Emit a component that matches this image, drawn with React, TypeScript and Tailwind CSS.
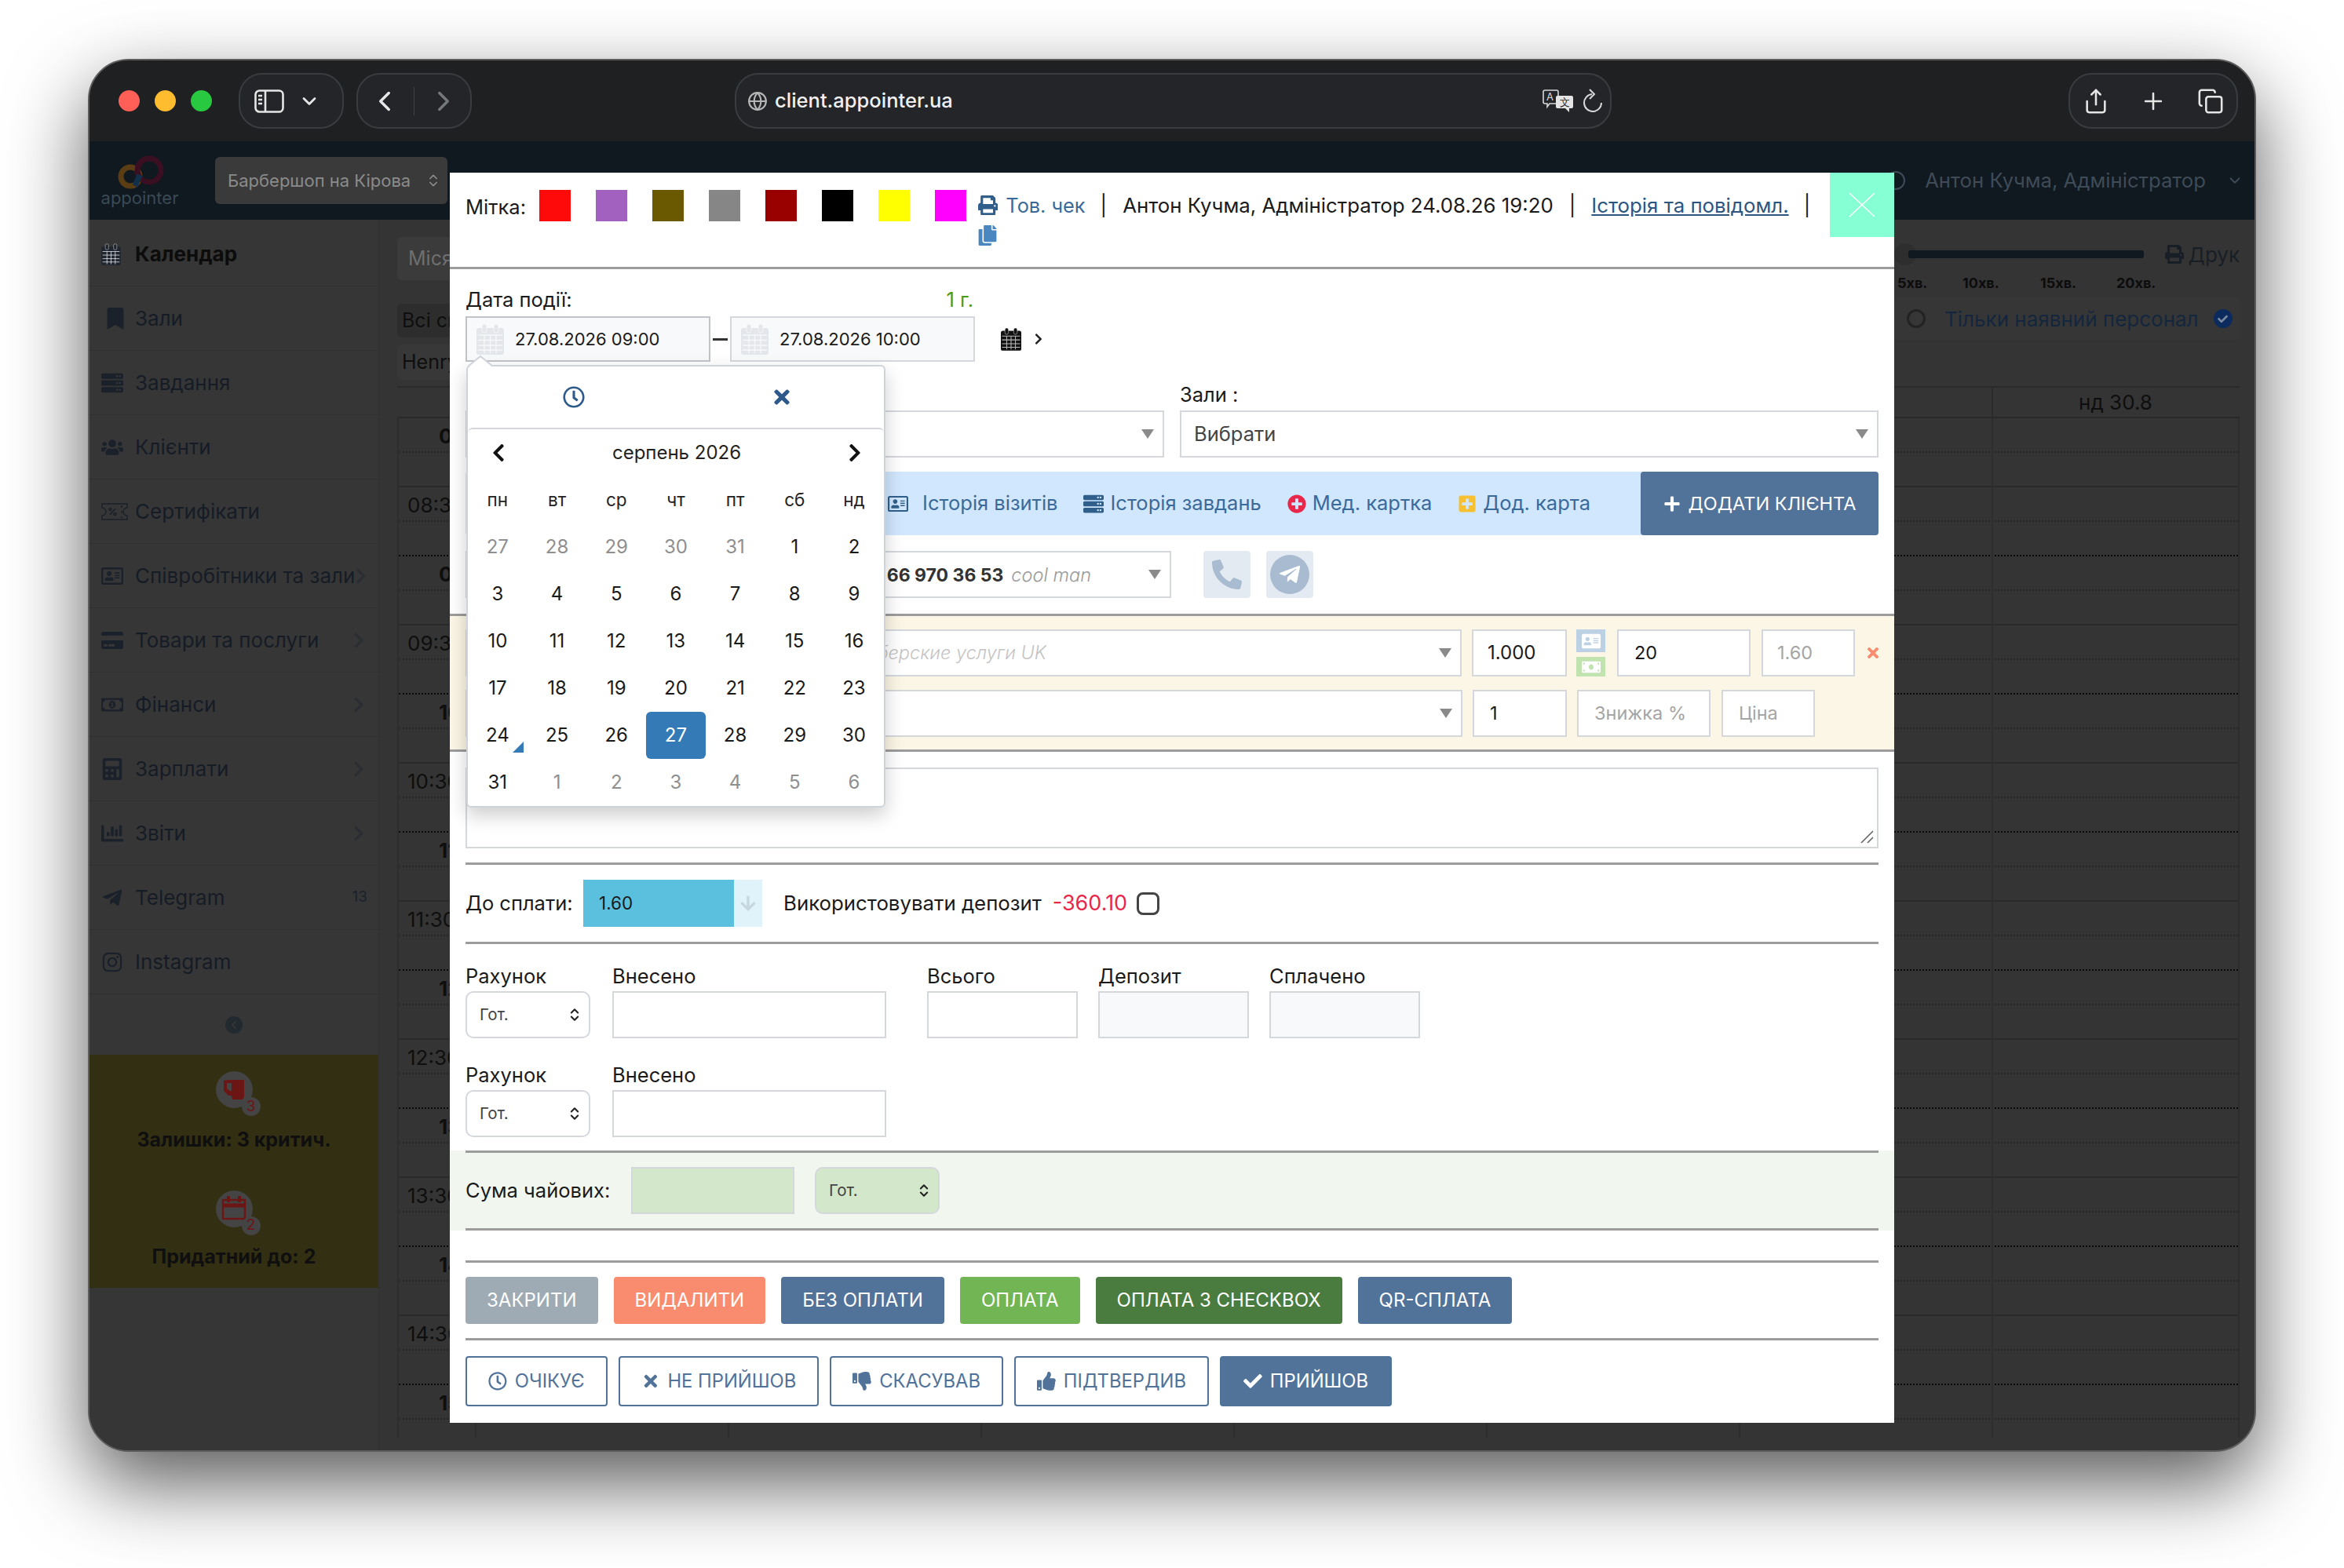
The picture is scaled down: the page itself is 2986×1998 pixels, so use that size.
import type { ReactNode } from "react";
import { ChevronDown, ChevronLeft, ChevronRight, ChevronsUpDown, Copy, Globe, Plus, Share } from "lucide-react";
import {
  FaAddressCard,
  FaArrowDown,
  FaBookmark,
  FaCheck,
  FaChevronLeft,
  FaChevronRight,
  FaCopy,
  FaInstagram,
  FaMoneyBill,
  FaPhone,
  FaPlus,
  FaPlusCircle,
  FaPlusSquare,
  FaPrint,
  FaRegAddressCard,
  FaRegClock,
  FaServer,
  FaTelegramPlane,
  FaThumbsDown,
  FaThumbsUp,
  FaTimes,
  FaUsers,
  FaCalculator,
  FaChartBar,
  FaCreditCard,
  FaRegMoneyBillAlt,
} from "react-icons/fa";

function CalendarGlyph({ width, height, className }: { width: number; height: number; className: string }) {
  return (
    <svg width={width} height={height} viewBox="0 0 35 40" fill="currentColor" className={className}>
      <path d="M3 6h29a3 3 0 0 1 3 3v28a3 3 0 0 1-3 3H3a3 3 0 0 1-3-3V9a3 3 0 0 1 3-3z" />
      <rect x="7" y="1" width="6" height="11" rx="3" stroke="white" strokeOpacity="0.6" />
      <rect x="22" y="1" width="6" height="11" rx="3" stroke="white" strokeOpacity="0.6" />
      <path d="M2 15h31M2 21.500h31M2 28h31M2 34h31M10 15v23M17.500 15v23M25 15v23" stroke="white" strokeOpacity="0.7" strokeWidth="1.400" />
    </svg>
  );
}

function TicketGlyph() {
  return (
    <svg width="34" height="22" viewBox="0 0 34 22" fill="none" stroke="currentColor" strokeWidth="1.500">
      <path d="M1 1h32v5a5 5 0 0 0 0 10v5H1v-5a5 5 0 0 0 0-10z" />
      <path d="M11 15l7-8M26 3v3M26 10v3M26 17v2" />
      <circle cx="11.500" cy="8" r="1.500" />
      <circle cx="17.500" cy="14" r="1.500" />
    </svg>
  );
}

const sideItems = [
  { label: "Календар", icon: <CalendarGlyph width={25} height={28} className="text-[#1f2630]" />, strong: true },
  { label: "Зали", icon: <FaBookmark className="ml-[4px]" /> },
  { label: "Завдання", icon: <FaServer /> },
  { label: "Клієнти", icon: <FaUsers /> },
  { label: "Сертифікати", icon: <TicketGlyph /> },
  { label: "Співробітники та зали", icon: <FaRegAddressCard />, arrow: true },
  { label: "Товари та послуги", icon: <FaCreditCard />, arrow: true },
  { label: "Фінанси", icon: <FaRegMoneyBillAlt />, arrow: true },
  { label: "Зарплати", icon: <FaCalculator />, arrow: true },
  { label: "Звіти", icon: <FaChartBar />, arrow: true },
  { label: "Telegram", icon: <FaTelegramPlane />, count: "13" },
  { label: "Instagram", icon: <FaInstagram /> },
];

const swatches = ["bg-[#ff0a0a]", "bg-[#a260bf]", "bg-[#6b5900]", "bg-[#868686]", "bg-[#990000]", "bg-black", "bg-[#ffff00]", "bg-[#ff00ff]"];

const calendarDays = [
  27, 28, 29, 30, 31, 1, 2, 3, 4, 5, 6, 7, 8, 9, 10, 11, 12, 13, 14, 15, 16, 17, 18, 19, 20, 21, 22, 23, 24, 25, 26, 27, 28, 29, 30, 31, 1, 2, 3, 4, 5, 6,
];

function Pill({ className, children }: { className: string; children: ReactNode }) {
  return <div className={`flex h-[71px] items-center rounded-[30px] border-2 border-[#3a3d40] bg-[#232528] ${className}`}>{children}</div>;
}

function Toolbar() {
  return (
    <div className="flex h-[103px] shrink-0 items-center bg-[#1e2022] text-[#e6e6e6]">
      <div className="ml-[37px] flex gap-[19px]">
        <span className="h-[27px] w-[27px] rounded-full bg-[#ff5f57]" />
        <span className="h-[27px] w-[27px] rounded-full bg-[#febc2e]" />
        <span className="h-[27px] w-[27px] rounded-full bg-[#28c840]" />
      </div>
      <Pill className="ml-[34px] w-[134px] gap-[18px] pl-[18px]">
        <svg width="38" height="30" viewBox="0 0 38 30" fill="none" stroke="#e6e6e6" strokeWidth="2.600">
          <rect x="1.500" y="1.500" width="35" height="27" rx="5" />
          <path d="M14 2v26M5 8h5M5 13h5M5 18h5" />
        </svg>
        <ChevronDown size={28} strokeWidth={2.400} />
      </Pill>
      <Pill className="ml-[16px] w-[147px] justify-between px-[13px]">
        <ChevronLeft size={42} strokeWidth={2} />
        <span className="h-[36px] w-px bg-[#3f4245]" />
        <ChevronRight size={42} strokeWidth={2} className="text-[#75787b]" />
      </Pill>
      <Pill className="ml-[335px] w-[1117px] gap-[9px] pl-[14px] pr-[8px]">
        <Globe size={26} className="text-[#b5b5b5]" />
        <span className="text-[25.500px] font-medium text-[#f0f0f0]">client.appointer.ua</span>
        <svg className="ml-auto" width="40" height="30" viewBox="0 0 40 30" fill="none">
          <path d="M3 1h15a2 2 0 0 1 2 2v13a2 2 0 0 1-2 2H9l-3 4v-4H3a2 2 0 0 1-2-2V3a2 2 0 0 1 2-2z" stroke="#d8d8d8" strokeWidth="1.600" />
          <text x="5" y="14" fontSize="13" fill="#d8d8d8">A</text>
          <path d="M19 8h18a2 2 0 0 1 2 2v12a2 2 0 0 1-2 2h-3v5l-5-5H19a2 2 0 0 1-2-2V10a2 2 0 0 1 2-2z" fill="#e4e4e4" />
          <text x="22" y="21" fontSize="13" fill="#232528">文</text>
        </svg>
        <svg className="ml-[1px]" width="28" height="32" viewBox="0 0 28 32" fill="none" stroke="#d8d8d8" strokeWidth="2">
          <path d="M13 7a11 11 0 1 0 12 11" />
          <path d="M10 1l6 6-6 6" />
        </svg>
      </Pill>
      <Pill className="ml-[582px] w-[216px] justify-between px-[16px]">
        <Share size={34} strokeWidth={1.800} />
        <Plus size={34} strokeWidth={1.800} />
        <Copy size={34} strokeWidth={1.800} />
      </Pill>
    </div>
  );
}

function TopNav() {
  return (
    <div className="flex h-[100px] shrink-0 items-center bg-[#101820]">
      <div className="ml-[14px] flex w-[100px] flex-col items-center">
        <svg width="64" height="46" viewBox="0 0 64 46" fill="none" strokeWidth="7">
          <circle cx="20" cy="28" r="12" stroke="#5a3d12" />
          <circle cx="44" cy="20" r="15" stroke="#3a0f22" />
          <path d="M26 40l6-14" stroke="#12304a" />
        </svg>
        <span className="mt-[-2px] text-[22px] leading-none text-[#3a4a55]">appointer</span>
      </div>
      <div className="ml-[46px] flex h-[60px] w-[296px] items-center rounded-[6px] bg-[#3a3a3a] pl-[16px] pr-[8px] text-[22px] text-[#8b8b8b]">
        Барбершоп на Кірова
        <ChevronsUpDown size={20} className="ml-auto" />
      </div>
      <div className="ml-auto mr-[26px] flex items-center gap-[25px] text-[25.700px] text-[#3f4b57]">
        <span className="h-[24px] w-[24px] rounded-full border-2 border-[#3f4b57]" />
        Антон Кучма, Адміністратор
      </div>
      <ChevronDown size={22} className="mr-[14px] text-[#3f4b57]" />
    </div>
  );
}

function Sidebar() {
  return (
    <div className="flex w-[369px] shrink-0 flex-col border-r border-[#303030] bg-[#363636] pt-[3px]">
      {sideItems.map((item) => (
        <div key={item.label} className="flex h-[82px] shrink-0 items-center border-b border-[#303030] pl-[15px] pr-[14px] text-[26px] text-[#151c26]">
          <span className="flex w-[43px] shrink-0 text-[28px] text-[#1a212b]">{item.icon}</span>
          <span className={`whitespace-nowrap ${item.strong ? "font-bold text-[#0c0c0c]" : ""}`}>{item.label}</span>
          {item.arrow && <FaChevronRight className="ml-auto text-[22px] text-[#2a2e32]" />}
          {item.count && <span className="ml-auto text-[19px] text-[#1a212b]">{item.count}</span>}
        </div>
      ))}
      <div className="flex h-[77px] shrink-0 items-center justify-center">
        <span className="flex h-[22px] w-[22px] items-center justify-center rounded-full bg-[#222a30] text-[12px] text-[#363636]">
          <FaChevronLeft />
        </span>
      </div>
      <div className="flex h-[297px] shrink-0 flex-col items-center bg-[#332f13] text-[25px] font-bold text-[#0f0f0f]">
        <span className="relative mt-[21px] flex h-[47px] w-[47px] items-center justify-center rounded-full bg-[#444444]">
          <svg width="28" height="28" viewBox="0 0 28 28" fill="#6b1515">
            <path d="M7 1h20v22l-2 3H12l-1-5H7l-6-6V2zM5 5v7l4 3h2V5z" fillRule="evenodd" />
          </svg>
          <span className="absolute -bottom-[10px] -right-[10px] flex h-[24px] w-[24px] items-center justify-center rounded-full bg-[#444444] text-[19px] font-normal text-[#6b1515]">3</span>
        </span>
        <span className="mt-[22px]">Залишки: 3 критич.</span>
        <span className="relative mt-[45px] flex h-[47px] w-[47px] items-center justify-center rounded-full bg-[#444444]">
          <svg width="32" height="34" viewBox="0 0 32 34" fill="none" stroke="#6b1515" strokeWidth="2.500">
            <path d="M30 30H2V6h28v24z" />
            <path d="M2 13h28" strokeWidth="5" />
            <path d="M9 1v8M23 1v8" strokeWidth="4" />
          </svg>
          <span className="absolute -bottom-[10px] -right-[10px] flex h-[24px] w-[24px] items-center justify-center rounded-full bg-[#444444] text-[19px] font-normal text-[#6b1515]">2</span>
        </span>
        <span className="mt-[19px]">Придатний до: 2</span>
      </div>
    </div>
  );
}

function Schedule() {
  const rows = Array.from({ length: 30 }, (_, i) => i);
  const cols = [0, 1, 2, 3, 4, 5, 6];
  const lines = ["border-dotted border-[#262626]", "border-solid border-[#2a2a2a]", "border-dotted border-[#262626]", "border-dotted border-[#0a0a0a]"];
  return (
    <div className="flex min-w-0 flex-1 flex-col pl-[23px] pr-[19px]">
      <div className="flex h-[212px] shrink-0 justify-between">
        <div className="flex flex-col pt-[22px] text-[25px] text-[#0e0e0e]">
          <div className="flex h-[55px] w-[200px] items-center rounded-[6px] bg-[#3b3b3b] pl-[14px] text-[#6f6f6f]">Місяць</div>
          <div className="mt-[30px] flex h-[43px] w-[200px] items-center whitespace-nowrap rounded-[6px] bg-[#2d2d2d] pl-[6px]">Всі співроб.</div>
          <div className="mt-[9px] flex h-[45px] w-[200px] items-center rounded-[6px] bg-[#383838] pl-[6px]">Henry</div>
        </div>
        <div className="flex w-[440px] flex-col">
          <div className="mt-[28px] flex h-[32px] items-center">
            <span className="h-[28px] w-[28px] rounded-full bg-[#2e2e2e]" />
            <span className="ml-[-10px] h-[10px] w-[300px] rounded-[3px] bg-[#101820]" />
            <span className="ml-auto flex items-center gap-[6px] text-[26px] text-[#181e26]">
              <FaPrint className="text-[24px]" /> Друк
            </span>
          </div>
          <div className="mt-[7px] flex pl-[4px] text-[18px] font-bold text-[#0c0c0c]">
            <span className="w-[83px]">5хв.</span>
            <span className="w-[99px]">10хв.</span>
            <span className="w-[97px]">15хв.</span>
            <span>20хв.</span>
          </div>
          <div className="mt-[5px] flex h-[54px] items-center rounded-[4px] bg-[#363636] pl-[16px] text-[26px] text-[#14263d]">
            <span className="h-[24px] w-[24px] rounded-full border-[3px] border-[#222]" />
            <span className="ml-[24px] whitespace-nowrap">Тільки наявний персонал</span>
            <span className="ml-[19px] flex h-[24px] w-[24px] shrink-0 items-center justify-center rounded-full bg-[#0b2a5e] text-[13px] text-[#7a8aa0]">
              <FaCheck />
            </span>
          </div>
        </div>
      </div>
      <div className="flex h-[41px] shrink-0 border-y-2 border-[#2a2a2a] text-[26px] text-[#0e0e0e]">
        <div className="ml-[2031px] flex w-[314px] items-center justify-center border-l-2 border-[#2a2a2a]">нд 30.8</div>
      </div>
      <div className="flex h-[1299px] shrink-0 flex-col overflow-hidden border-x-2 border-[#2d2d2d]">
        {rows.map((i) => (
          <div key={i} className={`flex h-[44px] shrink-0 border-b-2 ${lines[i % 4]}`}>
            <div className="w-[97px] shrink-0 text-[26px] leading-[46px] text-[#0e0e0e]">
              {i % 4 === 0 && <span className="ml-[51px] font-bold">{String(8 + i / 4).padStart(2, "0")}</span>}
              {i % 4 === 2 && <span className="ml-[11px]">{String(8 + (i - 2) / 4).padStart(2, "0")}:30</span>}
            </div>
            {cols.map((c) => (
              <div key={c} className="-mb-[2px] w-[322px] shrink-0 border-l-2 border-solid border-[#2d2d2d]" />
            ))}
          </div>
        ))}
      </div>
    </div>
  );
}

function Caret() {
  return <span className="ml-auto h-0 w-0 shrink-0 border-x-[8px] border-t-[12px] border-x-transparent border-t-[#8a8a8a]" />;
}

function Field({ className, children }: { className: string; children?: ReactNode }) {
  return <div className={`flex shrink-0 items-center border-2 border-[#d4d8dd] bg-white ${className}`}>{children}</div>;
}

function Rule({ className = "" }: { className?: string }) {
  return <div className={`mx-5 h-[3px] shrink-0 bg-[#9c9c9c] ${className}`} />;
}

function AccountSelect({ className = "bg-white" }: { className?: string }) {
  return (
    <div className={`flex h-[60px] w-[159px] shrink-0 items-center justify-between rounded-[10px] border-2 border-[#d4d8dd] pl-[16px] pr-[8px] text-[20.500px] text-[#444] ${className}`}>
      Гот.
      <ChevronsUpDown size={20} strokeWidth={2.500} className="text-[#222]" />
    </div>
  );
}

function DatePicker() {
  const labels = ["пн", "вт", "ср", "чт", "пт", "сб", "нд"];
  return (
    <div className="absolute left-[21px] top-[245px] z-10 w-[534px] rounded-[6px] border-2 border-[#cfd4da] bg-white shadow-[0_10px_24px_rgba(0,0,0,0.2)]">
      <svg className="absolute -top-[14px] left-[0px]" width="32" height="14" viewBox="0 0 32 14" fill="white" stroke="#cfd4da" strokeWidth="2">
        <path d="M0 14L16 1l16 13" />
      </svg>
      <div className="flex h-[78px] items-center text-[28px] text-[#2d5a8a]">
        <span className="ml-[121px]">
          <FaRegClock />
        </span>
        <span className="ml-[237px]">
          <FaTimes />
        </span>
      </div>
      <div className="rounded-[6px] border-t-2 border-[#d4d8dd]">
        <div className="flex h-[60px] items-center justify-between pl-[26px] pr-[24px] text-[26px]">
          <FaChevronLeft className="text-[#111]" />
          <span className="text-[24px] text-[#222]">серпень 2026</span>
          <FaChevronRight className="text-[#111]" />
        </div>
        <div className="grid grid-cols-[repeat(7,75.7px)] text-center text-[24px]">
          {labels.map((d) => (
            <div key={d} className="flex h-[60px] items-center justify-center text-[22.500px] text-[#222]">
              {d}
            </div>
          ))}
          {calendarDays.map((d, i) => {
            const muted = i < 5 || i > 35;
            const selected = i === 31;
            return (
              <div
                key={i}
                className={`relative flex h-[60px] items-center justify-center rounded-[6px] ${selected ? "bg-[#337ab7] text-white" : muted ? "text-[#8f8f8f]" : "text-[#1a1a1a]"}`}
              >
                {d}
                {i === 28 && <span className="absolute bottom-[8px] right-[5px] h-0 w-0 border-b-[14px] border-l-[14px] border-b-[#337ab7] border-l-transparent" />}
              </div>
            );
          })}
        </div>
      </div>
    </div>
  );
}

function LinkItem({ icon, label, className = "" }: { icon: ReactNode; label: string; className?: string }) {
  return (
    <span className={`flex items-center gap-[8px] whitespace-nowrap ${className}`}>
      {icon}
      {label}
    </span>
  );
}

function Modal() {
  const primary = [
    { label: "Закрити", color: "bg-[#9eabb4]" },
    { label: "Видалити", color: "bg-[#f98b6f]" },
    { label: "Без оплати", color: "bg-[#517299]" },
    { label: "Оплата", color: "bg-[#72b554]" },
    { label: "Оплата з Checkbox", color: "bg-[#4a7c40]" },
    { label: "QR-сплата", color: "bg-[#517299]" },
  ];
  const statuses = [
    { label: "Очікує", icon: <FaRegClock /> },
    { label: "Не прийшов", icon: <FaTimes /> },
    { label: "Скасував", icon: <FaThumbsDown /> },
    { label: "Підтвердив", icon: <FaThumbsUp /> },
  ];
  return (
    <div className="absolute left-[459px] top-[143px] z-10 flex h-[1593px] w-[1840px] flex-col bg-white text-[25.500px] text-[#1a1a1a]">
      <div className="relative flex h-[123px] shrink-0 border-b-[3px] border-[#9c9c9c] pl-5 pt-[22px]">
        <span className="mt-[3px] w-[94px] shrink-0">Мітка:</span>
        <div className="flex h-[40px] gap-[32px]">
          {swatches.map((c) => (
            <span key={c} className={`h-[40px] w-[40px] ${c}`} />
          ))}
        </div>
        <div className="ml-[15px] mt-[5px] w-[1070px] text-[25.800px] leading-[30px]">
          <span className="text-[25.300px] text-[#3a6a9a]">
            <FaPrint className="mr-[10px] inline align-[-3px] text-[#2f5f8a]" />
            Тов. чек
          </span>
          <span className="ml-[19px] mr-[20px]">|</span>
          <span>Антон Кучма, Адміністратор 24.08.26 19:20</span>
          <span className="mx-[20px]">|</span>
          <span className="text-[#2c5580] underline">Історія та повідомл.</span>
          <span className="ml-[19px]">|</span>
          <FaCopy className="-ml-[1px] mt-[10px] block text-[26px] text-[#4a86c0]" />
        </div>
        <div className="absolute right-0 top-0 flex h-[82px] w-[82px] items-center justify-center bg-[#85ffd3]">
          <svg width="36" height="32" viewBox="0 0 36 32" stroke="white" strokeWidth="1.500" fill="none">
            <path d="M2 1l32 30M34 1L2 31" />
          </svg>
        </div>
      </div>

      <div className="mt-[23px] flex h-[32px] w-[667px] shrink-0 items-center justify-between pl-5">
        <span>Дата події:</span>
        <span className="text-[#4a9a1a]">1 г.</span>
      </div>
      <div className="mt-[5px] flex h-[58px] shrink-0 items-center pl-5 text-[22px]">
        <div className="flex h-[58px] w-[312px] items-center gap-[14px] border-2 border-[#c0c4c8] bg-[#f8f9fa] pl-[12px]">
          <CalendarGlyph width={35} height={40} className="text-[#e3e6ea]" />
          27.08.2026 09:00
        </div>
        <span className="mx-[3px] h-[3px] w-[19px] bg-[#333]" />
        <div className="flex h-[58px] w-[312px] items-center gap-[14px] border-2 border-[#d4d8dd] bg-[#f8f9fa] pl-[12px]">
          <CalendarGlyph width={35} height={40} className="text-[#e3e6ea]" />
          27.08.2026 10:00
        </div>
        <CalendarGlyph width={26} height={30} className="ml-[33px] text-[#111]" />
        <FaChevronRight className="ml-[14px] text-[16px] text-[#222]" />
      </div>

      <div className="mt-[23px] flex shrink-0 gap-[20px] px-5">
        <div className="flex w-[890px] flex-col">
          <span className="h-[39px]">Майстер :</span>
          <Field className="h-[60px] pl-4 pr-[11px]">
            <Caret />
          </Field>
        </div>
        <div className="flex flex-1 flex-col">
          <span className="h-[39px]">Зали :</span>
          <Field className="h-[60px] pl-4 pr-[11px] text-[#444]">
            Вибрати
            <Caret />
          </Field>
        </div>
      </div>

      <div className="mx-5 mt-[18px] flex h-[81px] shrink-0 items-center rounded-[4px] bg-[#d1e7fd] text-[25.500px] text-[#3a6a9a]">
        <LinkItem className="ml-auto" icon={<FaRegAddressCard className="mr-[10px] text-[26px] text-[#2f5f8a]" />} label="Історія візитів" />
        <LinkItem className="ml-[33px]" icon={<FaServer className="text-[26px] text-[#2f5f8a]" />} label="Історія завдань" />
        <LinkItem className="ml-[33px]" icon={<FaPlusCircle className="text-[24px] text-[#e8274b]" />} label="Мед. картка" />
        <LinkItem className="ml-[33px]" icon={<FaPlusSquare className="text-[24px] text-[#f7c031]" />} label="Дод. карта" />
        <div className="ml-[64px] flex h-[81px] w-[303px] items-center justify-center gap-[10px] rounded-[4px] bg-[#517299] text-[23.500px] text-white">
          <FaPlus className="text-[22px]" />
          ДОДАТИ КЛІЄНТА
        </div>
      </div>

      <div className="mt-[20px] flex shrink-0 pl-5">
        <Field className="h-[60px] w-[899px] pr-[11px]">
          <span className="w-[795px] shrink-0 overflow-hidden whitespace-nowrap text-right">
            <b className="text-[23px] text-[#333]">66 970 36 53</b>
            <i className="ml-[10px] text-[23.500px] font-light text-[#9a9a9a]">cool man</i>
          </span>
          <Caret />
        </Field>
        <span className="ml-[41px] flex h-[60px] w-[60px] items-center justify-center rounded-[4px] bg-[#e4eaf1] text-[38px] text-[#a9bbd0]">
          <FaPhone className="-scale-x-100" />
        </span>
        <span className="ml-[20px] flex h-[60px] w-[60px] items-center justify-center rounded-[4px] bg-[#e4eaf1]">
          <span className="flex h-[50px] w-[50px] items-center justify-center rounded-full bg-[#a9bbd0] text-[30px] text-white">
            <FaTelegramPlane />
          </span>
        </span>
      </div>

      <div className="mt-[20px] flex h-[176px] shrink-0 flex-col border-y-[3px] border-[#9c9c9c] bg-[#fbf6e5] px-5 pt-[17px] text-[23.500px]">
        <div className="flex h-[60px] shrink-0 items-center">
          <Field className="h-[60px] w-[1269px] pr-[11px]">
            <i className="w-[738px] shrink-0 overflow-hidden whitespace-nowrap text-right font-light text-[#c4c4c4]">Барберские услуги UK</i>
            <Caret />
          </Field>
          <Field className="ml-[13px] h-[60px] w-[121px] pl-[18px] text-[24px]">1.000</Field>
          <div className="ml-[12px] flex h-[60px] w-[37px] shrink-0 flex-col justify-between">
            <span className="flex h-[29px] items-center justify-center bg-[#bcd2e4] text-[24px] text-white">
              <FaAddressCard />
            </span>
            <span className="flex h-[25px] items-center justify-center bg-[#c0e3b0] text-[24px] text-white">
              <FaMoneyBill />
            </span>
          </div>
          <Field className="ml-[15px] h-[60px] w-[170px] pl-[20px]">20</Field>
          <Field className="ml-[14px] h-[60px] w-[119px] pl-[18px] text-[#a5a5a5]">1.60</Field>
          <FaTimes className="ml-[16px] text-[24px] text-[#f98b6f]" />
        </div>
        <div className="mt-[17px] flex h-[60px] shrink-0 items-center">
          <Field className="h-[60px] w-[1270px] pr-[11px]">
            <Caret />
          </Field>
          <Field className="ml-[13px] h-[60px] w-[120px] pl-[20px]">1</Field>
          <Field className="ml-[13px] h-[60px] w-[170px] pl-[20px] text-[#a5a5a5]">Знижка %</Field>
          <Field className="ml-[14px] h-[60px] w-[119px] pl-[20px] text-[#a5a5a5]">Ціна</Field>
        </div>
      </div>

      <div className="relative mx-5 mt-[20px] h-[103px] shrink-0 border-2 border-[#d4d8dd]">
        <svg className="absolute bottom-[4px] right-[4px]" width="20" height="20" viewBox="0 0 20 20" stroke="#666" strokeWidth="1.600">
          <path d="M4 19L19 4M12 19l7-7" />
        </svg>
      </div>
      <Rule className="mt-[18px]" />

      <div className="mt-[19px] flex h-[60px] shrink-0 items-center pl-5">
        <span className="w-[150px]">До сплати:</span>
        <div className="flex h-[60px] w-[192px] items-center bg-[#5bc0de] pl-[20px] text-[22.500px]">1.60</div>
        <div className="flex h-[60px] w-[36px] items-center justify-center bg-[#e0f3fa] text-[22px] text-[#c6d7e0]">
          <FaArrowDown />
        </div>
        <span className="ml-[27px] text-[25.800px]">Використовувати депозит</span>
        <span className="ml-[14px] text-[27px] text-[#e8274b]">-360.10</span>
        <span className="ml-[12px] h-[29px] w-[29px] rounded-[8px] border-[3px] border-[#444]" />
      </div>
      <Rule className="mt-[19px]" />

      <div className="mt-[22px] flex shrink-0 px-5">
        <div className="w-[159px]">
          <div className="h-[38px]">Рахунок</div>
          <AccountSelect />
        </div>
        <div className="ml-[28px] w-[349px]">
          <div className="h-[38px]">Внесено</div>
          <div className="h-[60px] border-2 border-[#d4d8dd]" />
        </div>
        <div className="ml-[52px] w-[192px]">
          <div className="h-[38px]">Всього</div>
          <div className="h-[60px] border-2 border-[#d4d8dd]" />
        </div>
        <div className="ml-[26px] w-[192px]">
          <div className="h-[38px]">Депозит</div>
          <div className="h-[60px] border-2 border-[#d4d8dd] bg-[#f8f9fa]" />
        </div>
        <div className="ml-[26px] w-[192px]">
          <div className="h-[38px]">Сплачено</div>
          <div className="h-[60px] border-2 border-[#d4d8dd] bg-[#f8f9fa]" />
        </div>
      </div>
      <div className="mt-[28px] flex shrink-0 px-5">
        <div className="w-[159px]">
          <div className="h-[38px]">Рахунок</div>
          <AccountSelect />
        </div>
        <div className="ml-[28px] w-[349px]">
          <div className="h-[38px]">Внесено</div>
          <div className="h-[60px] border-2 border-[#d4d8dd]" />
        </div>
      </div>

      <div className="mt-[17px] flex h-[102px] shrink-0 flex-col bg-[#f1f7ef]">
        <Rule />
        <div className="flex flex-1 items-center pl-5">
          <span className="w-[211px]">Сума чайових:</span>
          <div className="h-[60px] w-[208px] border-2 border-[#d4d8dd] bg-[#d3e8cb]" />
          <AccountSelect className="ml-[26px] bg-[#d3e8cb]" />
        </div>
        <Rule />
      </div>
      <Rule className="mt-[38px]" />

      <div className="mt-[18px] flex shrink-0 gap-[20px] pl-5">
        {primary.map((b) => (
          <div key={b.label} className={`flex h-[60px] items-center rounded-[4px] px-[27px] text-[24px] uppercase text-white ${b.color}`}>
            {b.label}
          </div>
        ))}
      </div>
      <Rule className="mt-[18px]" />

      <div className="mt-[20px] flex shrink-0 gap-[14px] pl-5">
        {statuses.map((b) => (
          <div key={b.label} className="flex h-[64px] items-center gap-[10px] rounded-[4px] border-2 border-[#517299] px-[27px] text-[23.800px] uppercase text-[#517299]">
            {b.icon}
            {b.label}
          </div>
        ))}
        <div className="flex h-[64px] items-center gap-[10px] rounded-[4px] bg-[#517299] px-[30px] text-[23.800px] uppercase text-white">
          <FaCheck />
          Прийшов
        </div>
      </div>
      <DatePicker />
    </div>
  );
}

export default function App() {
  return (
    <div className="h-[1998px] w-[2986px] overflow-hidden bg-white pl-[112px] pt-[75px] [font-family:Inter,sans-serif]">
      <div className="relative flex h-[1775px] w-[2762px] flex-col overflow-hidden rounded-[52px] border-2 border-[#5d5d5d] bg-[#343434] shadow-[0_40px_100px_rgba(0,0,0,0.65)]">
        <Toolbar />
        <TopNav />
        <div className="flex min-h-0 flex-1">
          <Sidebar />
          <Schedule />
        </div>
        <Modal />
      </div>
    </div>
  );
}
